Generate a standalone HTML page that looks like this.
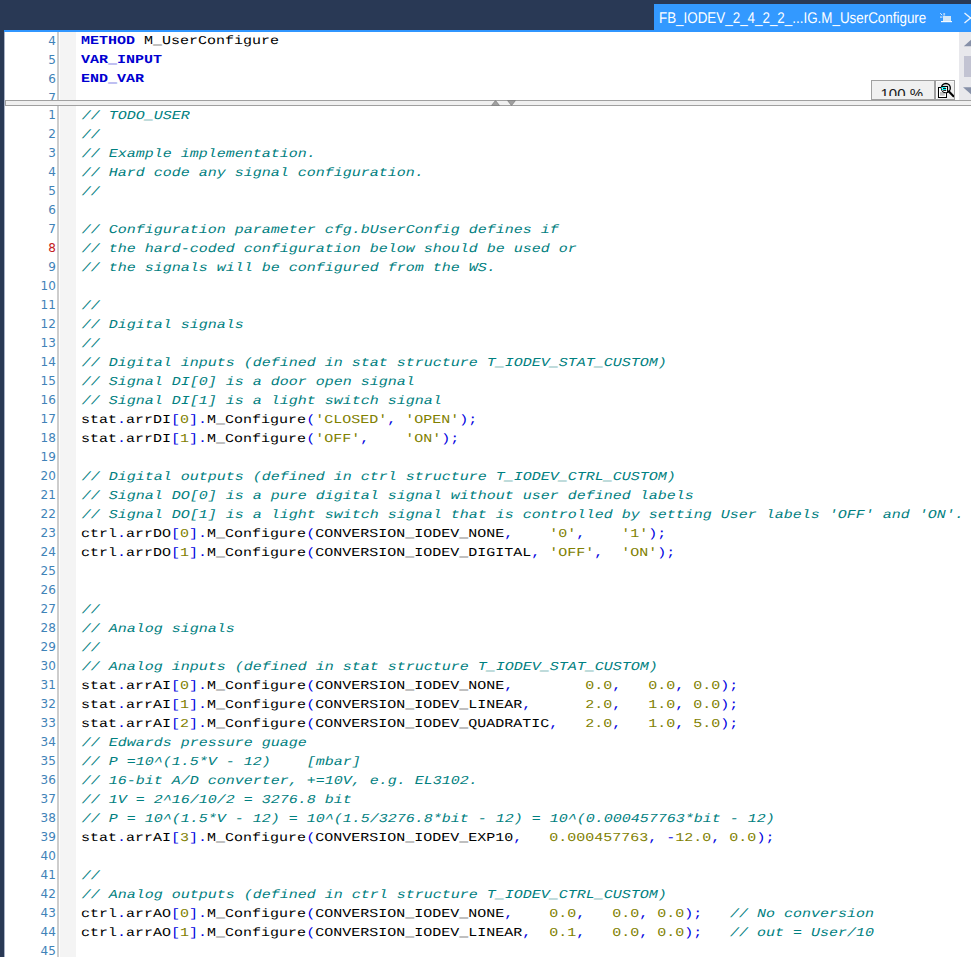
<!DOCTYPE html>
<html>
<head>
<meta charset="utf-8">
<title>FB_IODEV M_UserConfigure</title>
<style>
html, body { margin: 0; padding: 0; }
body { width: 971px; height: 957px; overflow: hidden; background: #293955; position: relative; font-family: "Liberation Sans", sans-serif; }
#tab { position: absolute; left: 654px; top: 4px; width: 330px; height: 28px; background: #3399ff; color: #fff; font-size: 15px; white-space: nowrap; }
#tab .t { position: absolute; left: 4.5px; top: 4.5px; font-size: 15.5px; line-height: 20px; transform: scaleX(0.864); transform-origin: 0 0; text-rendering: geometricPrecision; }
#blueline { position: absolute; left: 4px; top: 30px; width: 967px; height: 2px; background: #3096ff; }
#edge { position: absolute; left: 4px; top: 32px; width: 1px; height: 925px; background: #a9b3c7; }
.pane { position: absolute; left: 5px; background: #fff; overflow: hidden; }
#top { top: 32px; width: 966px; height: 68px; }
#bot { top: 106px; width: 966px; height: 851px; }
.pane .gl { position: absolute; left: 52px; top: 0; width: 2px; height: 100%; background: #cdcdcd; }
.pane .gb { position: absolute; left: 55px; top: 0; width: 16px; height: 100%; background: #f4f4f4; }
.lines { position: absolute; left: 0; top: 0; width: 100%; }
.ln { position: relative; height: 19px; line-height: 19px; white-space: pre; }
.ln .n { position: absolute; left: 0; top: 0; width: 51.3px; text-align: right; font-family: "DejaVu Sans", "Liberation Sans", sans-serif; font-size: 12px; color: #3f83b8; letter-spacing: 0.3px; }
.ln .n.cur { color: #c42020; }
.ln .c { position: absolute; left: 76px; top: 0; font-family: "Liberation Mono", monospace; font-size: 15px; color: #000; transform: scaleY(0.81); transform-origin: 0 13px; text-rendering: geometricPrecision; }
#top .ln .c { top: -1px; }
.c .cm { color: #008080; font-style: italic; position: relative; left: 0.7px; }
.c .p { color: #0000e0; }
.c .v { color: #808000; }
.c .kw { color: #0000d0; font-weight: bold; }
#split { position: absolute; left: 5px; top: 100px; width: 965px; border-left: 1px solid #a0a0a0; height: 4px; background: #f0f0f0; border-top: 1px solid #a0a0a0; border-bottom: 1px solid #a0a0a0; }
#sb { position: absolute; left: 954px; top: 0; width: 17px; height: 68px; background: #e8e8ec; }
#zoom { position: absolute; left: 866px; top: 48px; width: 62px; height: 18px; border: 1px solid #a0a0a0; background: #f0f0f0; overflow: hidden; }
#zoom .zt { position: absolute; left: 0; top: 0; width: 62px; height: 15px; overflow: hidden; }
#zoom .zt span { position: absolute; left: 8.5px; top: 5px; font-size: 15px; line-height: 16px; color: #1a1a1a; }
#zbtn { position: absolute; left: 930px; top: 48px; width: 18px; height: 18px; border: 1px solid #a0a0a0; background: #f0f0f0; }
</style>
</head>
<body>
<div id="tab"><span class="t">FB_IODEV_2_4_2_2_...IG.M_UserConfigure</span>
<svg style="position:absolute;left:285px;top:8px" width="14" height="12" viewBox="0 0 14 12"><rect x="4" y="4" width="8" height="5.500" fill="#d2e7f8"/><rect x="2" y="9" width="11" height="1.200" fill="#f4faff"/><path d="M1.200 1.200l2 2" stroke="#e6f2ff" stroke-width="1"/><rect x="4.300" y="1" width="1.800" height="2.600" fill="#a8d2fb"/><rect x="1" y="4.300" width="2.400" height="1.600" fill="#a8d2fb"/></svg>
<svg style="position:absolute;left:309px;top:8px" width="16" height="12" viewBox="0 0 16 12"><path d="M1.500 1l12 10M13.500 1L1.500 11" stroke="#eaf4ff" stroke-width="1.400" fill="none"/></svg>
</div>
<div id="blueline"></div>
<div id="edge"></div>
<div class="pane" id="top">
<div class="gl"></div><div class="gb"></div>
<div class="lines">
<div class="ln"><span class="n">4</span><span class="c"><span class="kw">METHOD</span> M_UserConfigure</span></div>
<div class="ln"><span class="n">5</span><span class="c"><span class="kw">VAR_INPUT</span></span></div>
<div class="ln"><span class="n">6</span><span class="c"><span class="kw">END_VAR</span></span></div>
<div class="ln"><span class="n">7</span><span class="c"></span></div>
</div>
<div id="sb">
<svg style="position:absolute;left:0;top:0" width="17" height="68" viewBox="0 0 17 68"><path d="M4.800 14.200L12.500 7.200L20.200 14.200z" fill="#8690a8"/><rect x="5" y="24" width="12" height="21" fill="#c2c3d2"/><path d="M4 55.200L12.500 62.700L21 55.200z" fill="#8690a8"/></svg>
</div>
<div id="zoom"><div class="zt"><span>100 %</span></div></div>
<div id="zbtn">
<svg width="18" height="18" viewBox="0 0 18 18" style="position:absolute;left:0;top:0"><defs><clipPath id="lens"><circle cx="9.850" cy="7" r="4.300"/></clipPath></defs><path d="M0.500 18V0.500H18" fill="none" stroke="#fbfbfb" stroke-width="1"/><rect x="2.500" y="6.500" width="8" height="10" fill="#fff" stroke="#000" stroke-width="1"/><rect x="4" y="11" width="4.700" height="3.700" fill="#c0c0c0"/><circle cx="9.850" cy="7" r="4.500" fill="#dcdcdc" stroke="#000" stroke-width="1.300"/><g clip-path="url(#lens)"><rect x="4.500" y="5.500" width="7" height="8" fill="#fff" stroke="#000" stroke-width="1"/><path d="M5 6.500H9.500M5.500 8.500H10M5.500 7L7 9" stroke="#00f4f4" stroke-width="1" fill="none"/><path d="M7 7.500H10.200M7.200 9.500H10.200" stroke="#000" stroke-width="0.900" fill="none"/></g><path d="M12.900 10.400L17.500 15.200" stroke="#000" stroke-width="2.100" stroke-linecap="round"/></svg>
</div>
</div>
<div id="split">
<svg style="position:absolute;left:482.800px;top:-1px" width="30" height="6" viewBox="0 0 30 6"><path d="M2.500 5.500h8l-4-5z" fill="#a0a0a0" stroke="#808080" stroke-width="0.800"/><path d="M18.500 0.500h8l-4 5z" fill="#a0a0a0" stroke="#808080" stroke-width="0.800"/></svg>
</div>
<div class="pane" id="bot">
<div class="gl"></div><div class="gb"></div>
<div class="lines">
<div class="ln"><span class="n">1</span><span class="c"><span class="cm">// TODO_USER</span></span></div>
<div class="ln"><span class="n">2</span><span class="c"><span class="cm">//</span></span></div>
<div class="ln"><span class="n">3</span><span class="c"><span class="cm">// Example implementation.</span></span></div>
<div class="ln"><span class="n">4</span><span class="c"><span class="cm">// Hard code any signal configuration.</span></span></div>
<div class="ln"><span class="n">5</span><span class="c"><span class="cm">//</span></span></div>
<div class="ln"><span class="n">6</span><span class="c"></span></div>
<div class="ln"><span class="n">7</span><span class="c"><span class="cm">// Configuration parameter cfg.bUserConfig defines if</span></span></div>
<div class="ln"><span class="n cur">8</span><span class="c"><span class="cm">// the hard-coded configuration below should be used or</span></span></div>
<div class="ln"><span class="n">9</span><span class="c"><span class="cm">// the signals will be configured from the WS.</span></span></div>
<div class="ln"><span class="n">10</span><span class="c"></span></div>
<div class="ln"><span class="n">11</span><span class="c"><span class="cm">//</span></span></div>
<div class="ln"><span class="n">12</span><span class="c"><span class="cm">// Digital signals</span></span></div>
<div class="ln"><span class="n">13</span><span class="c"><span class="cm">//</span></span></div>
<div class="ln"><span class="n">14</span><span class="c"><span class="cm">// Digital inputs (defined in stat structure T_IODEV_STAT_CUSTOM)</span></span></div>
<div class="ln"><span class="n">15</span><span class="c"><span class="cm">// Signal DI[0] is a door open signal</span></span></div>
<div class="ln"><span class="n">16</span><span class="c"><span class="cm">// Signal DI[1] is a light switch signal</span></span></div>
<div class="ln"><span class="n">17</span><span class="c">stat<span class="p">.</span>arrDI<span class="p">[</span><span class="v">0</span><span class="p">]</span><span class="p">.</span>M_Configure<span class="p">(</span><span class="v">&#x27;CLOSED&#x27;</span><span class="p">,</span> <span class="v">&#x27;OPEN&#x27;</span><span class="p">)</span><span class="p">;</span></span></div>
<div class="ln"><span class="n">18</span><span class="c">stat<span class="p">.</span>arrDI<span class="p">[</span><span class="v">1</span><span class="p">]</span><span class="p">.</span>M_Configure<span class="p">(</span><span class="v">&#x27;OFF&#x27;</span><span class="p">,</span>    <span class="v">&#x27;ON&#x27;</span><span class="p">)</span><span class="p">;</span></span></div>
<div class="ln"><span class="n">19</span><span class="c"></span></div>
<div class="ln"><span class="n">20</span><span class="c"><span class="cm">// Digital outputs (defined in ctrl structure T_IODEV_CTRL_CUSTOM)</span></span></div>
<div class="ln"><span class="n">21</span><span class="c"><span class="cm">// Signal DO[0] is a pure digital signal without user defined labels</span></span></div>
<div class="ln"><span class="n">22</span><span class="c"><span class="cm">// Signal DO[1] is a light switch signal that is controlled by setting User labels &#x27;OFF&#x27; and &#x27;ON&#x27;.</span></span></div>
<div class="ln"><span class="n">23</span><span class="c">ctrl<span class="p">.</span>arrDO<span class="p">[</span><span class="v">0</span><span class="p">]</span><span class="p">.</span>M_Configure<span class="p">(</span>CONVERSION_IODEV_NONE<span class="p">,</span>    <span class="v">&#x27;0&#x27;</span><span class="p">,</span>    <span class="v">&#x27;1&#x27;</span><span class="p">)</span><span class="p">;</span></span></div>
<div class="ln"><span class="n">24</span><span class="c">ctrl<span class="p">.</span>arrDO<span class="p">[</span><span class="v">1</span><span class="p">]</span><span class="p">.</span>M_Configure<span class="p">(</span>CONVERSION_IODEV_DIGITAL<span class="p">,</span> <span class="v">&#x27;OFF&#x27;</span><span class="p">,</span>  <span class="v">&#x27;ON&#x27;</span><span class="p">)</span><span class="p">;</span></span></div>
<div class="ln"><span class="n">25</span><span class="c"></span></div>
<div class="ln"><span class="n">26</span><span class="c"></span></div>
<div class="ln"><span class="n">27</span><span class="c"><span class="cm">//</span></span></div>
<div class="ln"><span class="n">28</span><span class="c"><span class="cm">// Analog signals</span></span></div>
<div class="ln"><span class="n">29</span><span class="c"><span class="cm">//</span></span></div>
<div class="ln"><span class="n">30</span><span class="c"><span class="cm">// Analog inputs (defined in stat structure T_IODEV_STAT_CUSTOM)</span></span></div>
<div class="ln"><span class="n">31</span><span class="c">stat<span class="p">.</span>arrAI<span class="p">[</span><span class="v">0</span><span class="p">]</span><span class="p">.</span>M_Configure<span class="p">(</span>CONVERSION_IODEV_NONE<span class="p">,</span>        <span class="v">0.0</span><span class="p">,</span>   <span class="v">0.0</span><span class="p">,</span> <span class="v">0.0</span><span class="p">)</span><span class="p">;</span></span></div>
<div class="ln"><span class="n">32</span><span class="c">stat<span class="p">.</span>arrAI<span class="p">[</span><span class="v">1</span><span class="p">]</span><span class="p">.</span>M_Configure<span class="p">(</span>CONVERSION_IODEV_LINEAR<span class="p">,</span>      <span class="v">2.0</span><span class="p">,</span>   <span class="v">1.0</span><span class="p">,</span> <span class="v">0.0</span><span class="p">)</span><span class="p">;</span></span></div>
<div class="ln"><span class="n">33</span><span class="c">stat<span class="p">.</span>arrAI<span class="p">[</span><span class="v">2</span><span class="p">]</span><span class="p">.</span>M_Configure<span class="p">(</span>CONVERSION_IODEV_QUADRATIC<span class="p">,</span>   <span class="v">2.0</span><span class="p">,</span>   <span class="v">1.0</span><span class="p">,</span> <span class="v">5.0</span><span class="p">)</span><span class="p">;</span></span></div>
<div class="ln"><span class="n">34</span><span class="c"><span class="cm">// Edwards pressure guage</span></span></div>
<div class="ln"><span class="n">35</span><span class="c"><span class="cm">// P =10^(1.5*V - 12)    [mbar]</span></span></div>
<div class="ln"><span class="n">36</span><span class="c"><span class="cm">// 16-bit A/D converter, +=10V, e.g. EL3102.</span></span></div>
<div class="ln"><span class="n">37</span><span class="c"><span class="cm">// 1V = 2^16/10/2 = 3276.8 bit</span></span></div>
<div class="ln"><span class="n">38</span><span class="c"><span class="cm">// P = 10^(1.5*V - 12) = 10^(1.5/3276.8*bit - 12) = 10^(0.000457763*bit - 12)</span></span></div>
<div class="ln"><span class="n">39</span><span class="c">stat<span class="p">.</span>arrAI<span class="p">[</span><span class="v">3</span><span class="p">]</span><span class="p">.</span>M_Configure<span class="p">(</span>CONVERSION_IODEV_EXP10<span class="p">,</span>   <span class="v">0.000457763</span><span class="p">,</span> <span class="p">-</span><span class="v">12.0</span><span class="p">,</span> <span class="v">0.0</span><span class="p">)</span><span class="p">;</span></span></div>
<div class="ln"><span class="n">40</span><span class="c"></span></div>
<div class="ln"><span class="n">41</span><span class="c"><span class="cm">//</span></span></div>
<div class="ln"><span class="n">42</span><span class="c"><span class="cm">// Analog outputs (defined in ctrl structure T_IODEV_CTRL_CUSTOM)</span></span></div>
<div class="ln"><span class="n">43</span><span class="c">ctrl<span class="p">.</span>arrAO<span class="p">[</span><span class="v">0</span><span class="p">]</span><span class="p">.</span>M_Configure<span class="p">(</span>CONVERSION_IODEV_NONE<span class="p">,</span>    <span class="v">0.0</span><span class="p">,</span>   <span class="v">0.0</span><span class="p">,</span> <span class="v">0.0</span><span class="p">)</span><span class="p">;</span>   <span class="cm">// No conversion</span></span></div>
<div class="ln"><span class="n">44</span><span class="c">ctrl<span class="p">.</span>arrAO<span class="p">[</span><span class="v">1</span><span class="p">]</span><span class="p">.</span>M_Configure<span class="p">(</span>CONVERSION_IODEV_LINEAR<span class="p">,</span>  <span class="v">0.1</span><span class="p">,</span>   <span class="v">0.0</span><span class="p">,</span> <span class="v">0.0</span><span class="p">)</span><span class="p">;</span>   <span class="cm">// out = User/10</span></span></div>
<div class="ln"><span class="n">45</span><span class="c"></span></div>
</div>
</div>
</body>
</html>
